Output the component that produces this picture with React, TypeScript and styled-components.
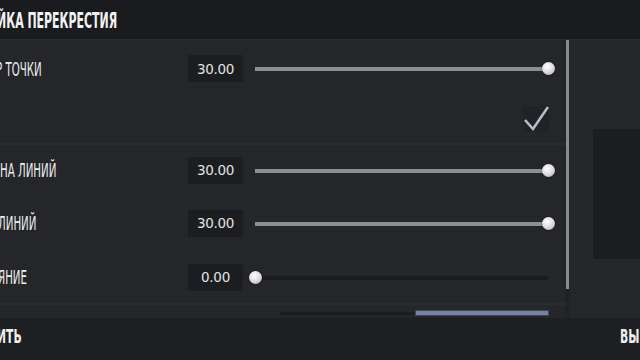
import React from 'react';
import styled, { createGlobalStyle } from 'styled-components';

const GlobalStyle = createGlobalStyle`
  html, body {
    margin: 0;
    padding: 0;
    background: #1e1f23;
    overflow: hidden;
  }
  * {
    box-sizing: border-box;
  }
`;

type SliderRow = { kind: 'slider'; label: string; value: number; max: number };
type CheckRow = { kind: 'check'; label: string; checked: boolean };
type Row = (SliderRow | CheckRow) & { divider?: boolean; cut?: number; height: number };

const rows: Row[] = [
  { kind: 'slider', label: 'Р ТОЧКИ', value: 30, max: 30, cut: 4, height: 51 },
  { kind: 'check', label: '', checked: true, divider: true, height: 50 },
  { kind: 'slider', label: 'НА ЛИНИЙ', value: 30, max: 30, height: 52 },
  { kind: 'slider', label: 'ЛИНИЙ', value: 30, max: 30, cut: 2, height: 54 },
  { kind: 'slider', label: 'ЯНИЕ', value: 0, max: 30, cut: 2, divider: true, height: 54 },
];

function App() {
  return (
    <>
      <GlobalStyle />
      <Screen>
        <Header>
          <Title>ЙКА ПЕРЕКРЕСТИЯ</Title>
        </Header>
        <Main>
          <List>
            {rows.map((row, i) => (
              <RowBox key={i} $divider={row.divider} $h={row.height}>
                <LabelCell>
                  <Label $cut={row.cut ?? 0}>{row.label}</Label>
                </LabelCell>
                {row.kind === 'slider' ? (
                  <>
                    <ValueBox>{row.value.toFixed(2)}</ValueBox>
                    <Slider>
                      <Track />
                      <Fill style={{ width: `${(row.value / row.max) * 100}%` }} />
                      <Thumb style={{ left: `${(row.value / row.max) * 100}%` }} />
                    </Slider>
                  </>
                ) : (
                  <CheckBox>
                    <svg width="26" height="26" viewBox="0 0 26 26">
                      <path
                        d="M2 14 L10 23 L25 1"
                        fill="none"
                        stroke="#b9bbc6"
                        strokeWidth="2.6"
                        strokeLinejoin="miter"
                      />
                    </svg>
                  </CheckBox>
                )}
              </RowBox>
            ))}
            <PartialRow>
              <DimBar />
              <BlueBar />
            </PartialRow>
          </List>
          <ScrollTrack>
            <ScrollThumb />
          </ScrollTrack>
          <Side>
            <Preview />
          </Side>
        </Main>
        <Footer>
          <FooterText>ИТЬ</FooterText>
          <FooterText>ВЫ</FooterText>
        </Footer>
      </Screen>
    </>
  );
}

export default App;

const condensed = `"Liberation Sans Narrow", "DejaVu Sans Condensed", "Roboto Condensed", sans-serif`;

const Screen = styled.div`
  width: 640px;
  height: 360px;
  display: flex;
  flex-direction: column;
  overflow: hidden;
  background: #1e1f23;
`;

const Header = styled.header`
  height: 39px;
  flex: none;
  background: #1a1b1f;
  display: flex;
  align-items: center;
  padding-top: 2px;
`;

const Title = styled.h1`
  margin: 0 0 0 -3px;
  font-family: ${condensed};
  font-weight: bold;
  font-size: 21px;
  color: #f2f2f2;
  transform: scaleX(0.58);
  transform-origin: left center;
  white-space: nowrap;
`;

const Main = styled.main`
  flex: none;
  height: 279px;
  display: flex;
  background: #25262a;
  border-top: 1px solid #2a2b30;
`;

const List = styled.div`
  width: 565px;
  flex: none;
  padding-top: 4px;
  overflow: hidden;
`;

const RowBox = styled.div<{ $divider?: boolean; $h: number }>`
  height: ${(p) => p.$h}px;
  display: flex;
  align-items: center;
  border-bottom: 2px solid ${(p) => (p.$divider ? '#2c2d32' : '#27282d')};
  padding-right: 11px;
`;

const LabelCell = styled.div`
  width: 188px;
  flex: none;
  overflow: hidden;
`;

const Label = styled.div<{ $cut: number }>`
  margin-left: ${(p) => -p.$cut}px;
  font-family: ${condensed};
  font-size: 19px;
  color: #ececec;
  white-space: nowrap;
  transform: scaleX(0.6);
  transform-origin: left center;
`;

const ValueBox = styled.div`
  width: 55px;
  height: 27px;
  flex: none;
  background: #1c1d21;
  color: #e2e2e2;
  font-family: "DejaVu Sans", sans-serif;
  font-size: 13.5px;
  display: flex;
  align-items: center;
  justify-content: center;
  letter-spacing: -0.3px;
`;

const Slider = styled.div`
  position: relative;
  flex: 1;
  height: 13px;
  margin: 0 6px 0 12px;
`;

const Track = styled.div`
  position: absolute;
  left: 0;
  right: 0;
  top: 5px;
  height: 4px;
  background: #1b1c1f;
`;

const Fill = styled.div`
  position: absolute;
  left: 0;
  top: 5px;
  height: 4px;
  background: #8d8e93;
`;

const Thumb = styled.div`
  position: absolute;
  top: 0;
  width: 13px;
  height: 13px;
  margin-left: -6px;
  border-radius: 50%;
  background: radial-gradient(circle at 40% 35%, #ffffff 0%, #dcdcdc 50%, #a2a2a5 100%);
  box-shadow: 0 0 2px rgba(0, 0, 0, 0.6);
`;

const CheckBox = styled.div`
  margin-left: auto;
  margin-right: 5px;
  width: 26px;
  height: 26px;
  background: #212226;
  display: flex;
  align-items: center;
  justify-content: center;
`;

const PartialRow = styled.div`
  height: 20px;
  display: flex;
  align-items: flex-start;
  padding: 6px 0 0 280px;
`;

const DimBar = styled.div`
  width: 136px;
  height: 3px;
  margin-top: 1px;
  background: #1c1d21;
`;

const BlueBar = styled.div`
  width: 132px;
  height: 4px;
  background: #7283a6;
  box-shadow: 0 0 0 1px #3d475c;
`;

const ScrollTrack = styled.div`
  width: 5px;
  flex: none;
  background: #212226;
  padding: 0 1px;
`;

const ScrollThumb = styled.div`
  height: 249px;
  width: 3px;
  background: #8a8b90;
`;

const Side = styled.div`
  flex: 1;
  background: #26272b;
  padding: 89px 0 0 23px;
`;

const Preview = styled.div`
  height: 130px;
  background: #1c1d21;
`;

const Footer = styled.footer`
  flex: 1;
  background: #1e1f23;
  display: flex;
  justify-content: space-between;
  align-items: center;
  padding: 0 0 6px 0;
`;

const FooterText = styled.div`
  font-family: ${condensed};
  font-weight: bold;
  font-size: 20px;
  color: #efefef;
  margin-left: -3px;
  transform: scaleX(0.6);
  transform-origin: left center;
  &:last-child {
    margin-right: -12px;
  }
`;
